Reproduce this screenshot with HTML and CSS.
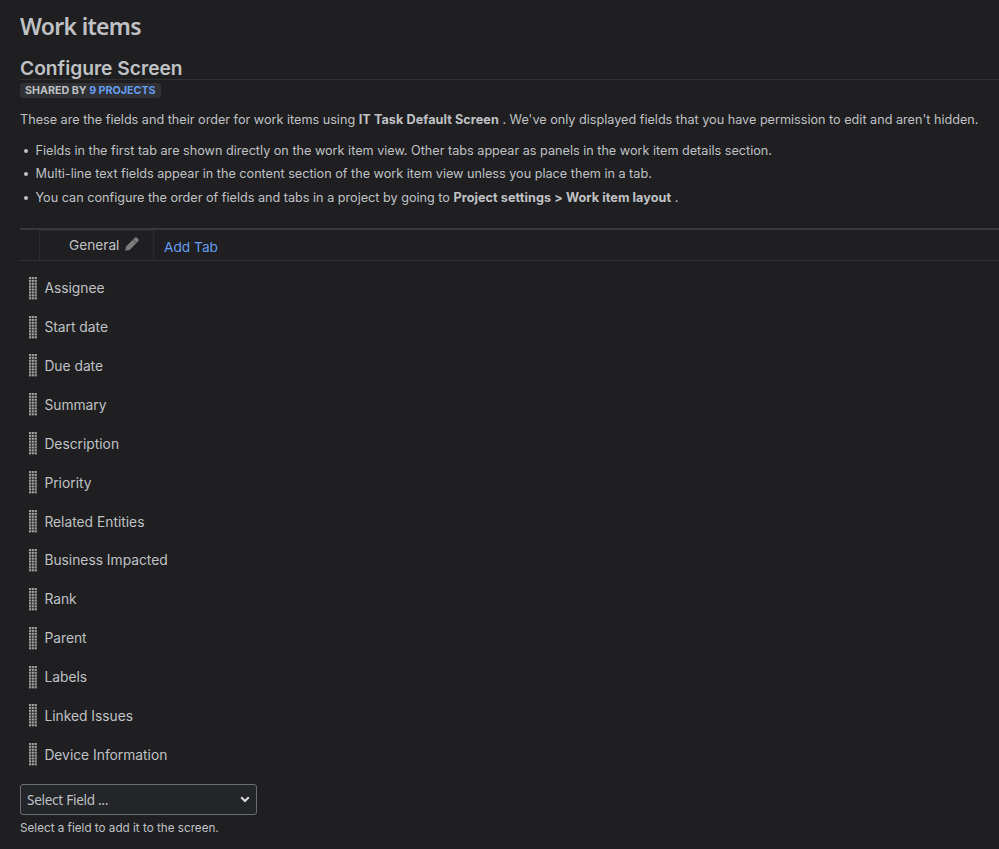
FILE: index.html
```html
<!DOCTYPE html>
<html lang="en">
<head>
	<meta charset="UTF-8">
	<title>Configure Screen</title>
	<link rel="stylesheet" href="styles.css">
</head>
<body>

	<h1 class="page-title">Work items</h1>

	<h2 class="screen-title">Configure Screen</h2>
	<div class="shared"><span class="lozenge">SHARED BY <a href="#">9 PROJECTS</a></span></div>

	<p class="intro">These are the fields and their order for work items using <strong>IT Task Default Screen</strong> . We've only displayed fields that you have permission to edit and aren't hidden.</p>
	<ul class="notes">
		<li>Fields in the first tab are shown directly on the work item view. Other tabs appear as panels in the work item details section.</li>
		<li>Multi-line text fields appear in the content section of the work item view unless you place them in a tab.</li>
		<li>You can configure the order of fields and tabs in a project by going to <strong>Project settings &gt; Work item layout</strong> .</li>
	</ul>

	<div class="tabs">
		<div class="tab">
			<span class="tab-name">General</span>
			<svg class="pencil" width="14" height="14" viewBox="0 0 14 14">
				<path d="M0.3 13.7 L1 9.4 L7.8 2.7 L11.3 6.2 L4.6 13 Z M8.1 2.4 L9.8 0.8 Q11 -0.2 12.2 0.9 L13.1 1.8 Q14.2 3 13.2 4.2 L11.6 5.9 Z"/>
			</svg>
		</div>
		<a class="add-tab" href="#">Add Tab</a>
	</div>

	<!-- drag handle dots, shared by every row -->
	<svg class="defs" width="0" height="0">
		<defs>
			<pattern id="dots" width="2.9" height="2.9" patternUnits="userSpaceOnUse">
				<rect width="2.2" height="2.1"/>
			</pattern>
		</defs>
	</svg>

	<ul class="fields">
		<li><svg class="grip" width="8" height="23"><rect width="8" height="23" fill="url(#dots)"/></svg><span>Assignee</span></li>
		<li><svg class="grip" width="8" height="23"><rect width="8" height="23" fill="url(#dots)"/></svg><span>Start date</span></li>
		<li><svg class="grip" width="8" height="23"><rect width="8" height="23" fill="url(#dots)"/></svg><span>Due date</span></li>
		<li><svg class="grip" width="8" height="23"><rect width="8" height="23" fill="url(#dots)"/></svg><span>Summary</span></li>
		<li><svg class="grip" width="8" height="23"><rect width="8" height="23" fill="url(#dots)"/></svg><span>Description</span></li>
		<li><svg class="grip" width="8" height="23"><rect width="8" height="23" fill="url(#dots)"/></svg><span>Priority</span></li>
		<li><svg class="grip" width="8" height="23"><rect width="8" height="23" fill="url(#dots)"/></svg><span>Related Entities</span></li>
		<li><svg class="grip" width="8" height="23"><rect width="8" height="23" fill="url(#dots)"/></svg><span>Business Impacted</span></li>
		<li><svg class="grip" width="8" height="23"><rect width="8" height="23" fill="url(#dots)"/></svg><span>Rank</span></li>
		<li><svg class="grip" width="8" height="23"><rect width="8" height="23" fill="url(#dots)"/></svg><span>Parent</span></li>
		<li><svg class="grip" width="8" height="23"><rect width="8" height="23" fill="url(#dots)"/></svg><span>Labels</span></li>
		<li><svg class="grip" width="8" height="23"><rect width="8" height="23" fill="url(#dots)"/></svg><span>Linked Issues</span></li>
		<li><svg class="grip" width="8" height="23"><rect width="8" height="23" fill="url(#dots)"/></svg><span>Device Information</span></li>
	</ul>

	<div class="select">
		<span>Select Field ...</span>
		<svg width="10" height="7" viewBox="0 0 10 7"><path d="M1.2 1.2 L5 5 L8.8 1.2"/></svg>
	</div>
	<p class="hint">Select a field to add it to the screen.</p>

</body>
</html>
```
FILE: styles.css
```css
* {
	box-sizing: border-box;
	margin: 0;
	padding: 0;
}

body {
	height: 849px;
	padding: 9px 0 0 20px;
	overflow: hidden;
	background: #1f1f21;
	color: #bfc1c4;
	font-family: Inter, sans-serif;
	font-size: 12.65px;
}

a {
	color: #669df1;
	text-decoration: none;
}

strong {
	letter-spacing: 0.07px;
}

ul {
	list-style: none;
}

.page-title {
	height: 49px;
	font: 600 23px/34px "Noto Sans", sans-serif;
	letter-spacing: -0.7px;
}

.screen-title {
	height: 22px;
	border-bottom: 1px solid #303033;
	font-size: 19.2px;
	font-weight: 600;
	line-height: 21px;
}

.shared {
	display: flex;
	padding-top: 3px;
}
.lozenge {
	height: 15px;
	padding: 0 5px;
	border-radius: 3px;
	background: #303134;
	font-size: 10.7px;
	font-weight: 700;
	line-height: 15px;
}

.intro {
	margin-top: 11px;
	line-height: 21px;
	white-space: nowrap;
}

.notes {
	margin-top: 9px;
	padding-left: 15.5px;
	line-height: 23.4px;
	white-space: nowrap;
}
.notes li {
	position: relative;
}
.notes li::before {
	content: "";
	position: absolute;
	top: 10px;
	left: -12px;
	width: 4px;
	height: 4px;
	border-radius: 50%;
	background: #bfc1c4;
}

.tabs {
	display: flex;
	height: 33px;
	margin-top: 19px;
	padding-left: 19px;
	border-top: 2px solid #38383b;
	border-bottom: 1px solid #303033;
	font-size: 13.7px;
}
.tab {
	display: flex;
	width: 115px;
	height: 30px;
	padding-left: 29px;
	border: 1px solid #2b2b2e;
	border-bottom: 0;
	line-height: 29px;
}
.pencil {
	margin: 6px 0 0 6px;
	fill: #7c7c7c;
}
.add-tab {
	padding-left: 10px;
	line-height: 34px;
}

.defs {
	display: block;
}
#dots {
	fill: #a2a2a0;
}

.fields {
	padding: 7.5px 0 0 9px;
	font-size: 13.8px;
}
.fields li {
	display: flex;
	align-items: center;
	gap: 7.4px;
	height: 38.9px;
}

.select {
	display: flex;
	align-items: center;
	justify-content: space-between;
	width: 237px;
	height: 31px;
	margin-top: 9.5px;
	padding: 0 6px 0 6px;
	border: 1px solid #6b6d72;
	border-radius: 3px;
	background: #242528;
	font: 13.6px/29px "Noto Sans", sans-serif;
	letter-spacing: -0.3px;
}
.select path {
	fill: none;
	stroke: #dcdcdc;
	stroke-width: 2;
}

.hint {
	margin-top: 5px;
	font-size: 11.7px;
	line-height: 16px;
}
```
